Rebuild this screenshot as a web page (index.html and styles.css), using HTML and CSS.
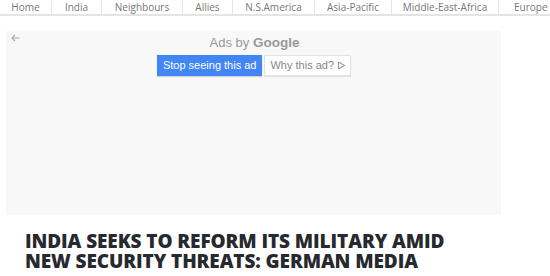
FILE: index.html
```html
<!DOCTYPE html>
<html>
<head>
<meta charset="utf-8">
<link rel="stylesheet" href="styles.css">
</head>
<body>
<nav class="nav">
  <a class="nav-item w-home">Home</a>
  <a class="nav-item w-india">India</a>
  <a class="nav-item w-neigh">Neighbours</a>
  <a class="nav-item w-allies">Allies</a>
  <a class="nav-item w-nsa">N.S.America</a>
  <a class="nav-item w-ap">Asia-Pacific</a>
  <a class="nav-item w-mea">Middle-East-Africa</a>
  <a class="nav-item w-eu">Europe</a>
</nav>
<div class="ad">
  <div class="ad-back">
    <svg width="9" height="8" viewBox="0 0 9 8"><path d="M4 1 L1 4 L4 7 M1 4 H8.5" fill="none" stroke="#aaa" stroke-width="1.1"/></svg>
  </div>
  <div class="ad-center">
    <div class="ads-by">Ads by <span class="google">Google</span></div>
    <div class="ad-buttons">
      <span class="btn-stop">Stop seeing this ad</span>
      <span class="btn-why">Why this ad? <svg width="9" height="9" viewBox="0 0 9 9"><path d="M1.5 1 V8 M1.5 1 L7.5 4.5 L1.5 8" fill="none" stroke="#999" stroke-width="1.1"/></svg></span>
    </div>
  </div>
</div>
<h1 class="title">INDIA SEEKS TO REFORM ITS MILITARY AMID NEW SECURITY THREATS: GERMAN MEDIA</h1>
</body>
</html>
```

FILE: styles.css
```css
html, body { margin: 0; padding: 0; background: #fff; }
body { width: 550px; overflow: hidden; }
.nav {
  display: flex;
  width: 550px;
  overflow: hidden;
  height: 14px;
  border-bottom: 2px solid #e4e4e4;
  font-family: "Open Sans", sans-serif;
  font-size: 10px;
  color: #777;
  white-space: nowrap;
}
.nav-item {
  display: flex;
  align-items: center;
  justify-content: center;
  border-right: 1px solid #e6e6e6;
  line-height: 14px;
  box-sizing: border-box;
  flex: none;
}
.w-home { width: 52px; }
.w-india { width: 50px; }
.w-neigh { width: 81px; }
.w-allies { width: 50px; }
.w-nsa { width: 82px; }
.w-ap { width: 77px; }
.w-mea { width: 107px; }
.w-eu { width: 51px; border-right: none; justify-content: flex-start; padding-left: 15px; }
.ad {
  margin: 15px 0 0 6px;
  width: 495px;
  height: 184px;
  background: #f8f8f9;
  position: relative;
  font-family: Arial, "Liberation Sans", sans-serif;
}
.ad-back { position: absolute; left: 5px; top: 3px; line-height: 0; }
.ad-center {
  display: flex;
  flex-direction: column;
  align-items: center;
  padding-top: 2px;
}
.ads-by {
  font-size: 13px;
  color: #999;
  height: 20px;
  line-height: 20px;
  margin-left: 2px;
}
.google { font-weight: bold; font-size: 13.5px; color: #999; margin-left: 0; }
.ad-buttons { display: flex; margin-top: 2px; margin-left: 1px; }
.btn-stop {
  background: #4285f4;
  color: #fff;
  font-size: 11px;
  height: 21px;
  line-height: 21px;
  padding: 0 6px;
  box-shadow: 0 1px 1px rgba(0,0,0,0.15);
}
.btn-why {
  margin-left: 2px;
  background: #fff;
  color: #888;
  font-size: 11px;
  height: 21px;
  line-height: 19px;
  padding: 0 4px 0 5px;
  border: 1px solid #e2e2e2;
  box-sizing: border-box;
  display: flex;
  align-items: center;
  gap: 3px;
  box-shadow: 0 1px 1px rgba(0,0,0,0.08);
}
.title {
  width: 440px;
  margin: 16px 0 0 25px;
  font-family: "Open Sans", sans-serif;
  font-weight: 800;
  font-size: 19px;
  line-height: 20px;
  color: #262a2e;
  letter-spacing: -0.1px;
}
```
